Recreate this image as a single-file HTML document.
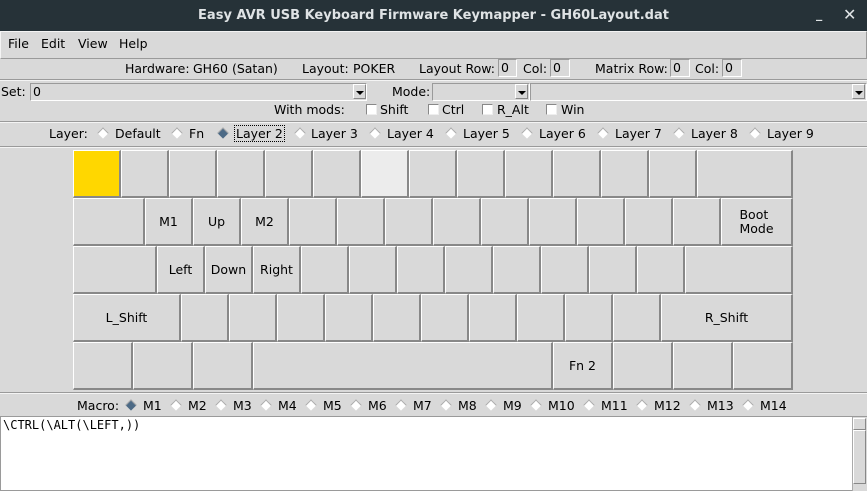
<!DOCTYPE html>
<html><head><meta charset="utf-8"><style>
*{margin:0;padding:0;box-sizing:border-box}
body{width:867px;height:491px;background:#d9d9d9;font-family:"DejaVu Sans","Liberation Sans",sans-serif;font-size:12.5px;color:#000;position:relative;overflow:hidden}
.a{position:absolute;white-space:nowrap;line-height:15px}
#title{position:absolute;left:0;top:0;width:867px;height:31px;background:#263238;color:#dfe3e5;font-weight:bold;font-size:13px;text-align:center;line-height:31px}
.hr{position:absolute;left:0;width:867px;height:2px;border-top:1px solid #9a9a9a;border-bottom:1px solid #f4f4f4}
.box{position:absolute;background:#d9d9d9;border:1px solid #9a9a9a;border-right-color:#fff;border-bottom-color:#fff;line-height:15px;padding-left:2px}
.cb{position:absolute;background:#d9d9d9;border:1px solid #9a9a9a;border-right-color:#fff;border-bottom-color:#fff;line-height:15px;padding-left:2px}
.arr{position:absolute;width:13px;height:15px;background:#d9d9d9;border:1px solid #fff;border-right-color:#888;border-bottom-color:#888}
.arr:after{content:"";position:absolute;left:2px;top:6px;border-left:4px solid transparent;border-right:4px solid transparent;border-top:4px solid #000}
.chk{position:absolute;width:11px;height:11px;background:#fff;border:1px solid #888;border-right-color:#eee;border-bottom-color:#eee}
.rd{position:absolute;width:8px;height:8px;background:#fff;transform:rotate(45deg);border-top:1px solid #aaa;border-left:1px solid #aaa}
.rd.on{background:#4c6a86}
.k{position:absolute;height:48px;background:#d9d9d9;border-top:1px solid #fff;border-left:1px solid #fff;border-right:2px solid #888;border-bottom:2px solid #888;text-align:center;display:flex;align-items:center;justify-content:center;line-height:14px}
</style></head><body>
<div id="title">Easy AVR USB Keyboard Firmware Keymapper - GH60Layout.dat</div>
<div class="a" style="left:816px;top:6px;color:#dfe3e5;font-weight:bold">_</div>
<div class="a" style="left:843px;top:7px;color:#dfe3e5;font-size:16px">✕</div>
<div style="position:absolute;left:0;top:31px;width:867px;height:28px;border-top:1px solid #f4f4f4;border-bottom:1px solid #9a9a9a;border-left:1px solid #f4f4f4;border-right:1px solid #9a9a9a"></div>
<div class="a" style="left:8px;top:36px">File</div>
<div class="a" style="left:41px;top:36px">Edit</div>
<div class="a" style="left:78px;top:36px">View</div>
<div class="a" style="left:119px;top:36px">Help</div>

<div class="a" style="left:125px;top:61px">Hardware:</div>
<div class="a" style="left:193px;top:61px">GH60 (Satan)</div>
<div class="a" style="left:302px;top:61px">Layout:</div>
<div class="a" style="left:353px;top:61px">POKER</div>
<div class="a" style="left:419px;top:61px">Layout Row:</div>
<div class="box" style="left:498px;top:59px;width:19px;height:18px">0</div>
<div class="a" style="left:523px;top:61px">Col:</div>
<div class="box" style="left:550px;top:59px;width:20px;height:18px">0</div>
<div class="a" style="left:595px;top:61px">Matrix Row:</div>
<div class="box" style="left:670px;top:59px;width:20px;height:18px">0</div>
<div class="a" style="left:695px;top:61px">Col:</div>
<div class="box" style="left:722px;top:59px;width:20px;height:18px">0</div>
<div class="hr" style="top:79px"></div>

<div class="a" style="left:1px;top:84px">Set:</div>
<div class="cb" style="left:30px;top:83px;width:337px;height:18px">0</div>
<div class="arr" style="left:353px;top:84px"></div>
<div class="a" style="left:392px;top:84px">Mode:</div>
<div class="cb" style="left:432px;top:83px;width:98px;height:18px"></div>
<div class="arr" style="left:515px;top:84px"></div>
<div class="cb" style="left:530px;top:83px;width:337px;height:18px"></div>
<div class="arr" style="left:852px;top:84px"></div>
<div class="a" style="left:274px;top:102px">With mods:</div>
<div class="chk" style="left:366px;top:104px"></div><div class="a" style="left:380px;top:102px">Shift</div>
<div class="chk" style="left:428px;top:104px"></div><div class="a" style="left:442px;top:102px">Ctrl</div>
<div class="chk" style="left:482px;top:104px"></div><div class="a" style="left:497px;top:102px">R_Alt</div>
<div class="chk" style="left:546px;top:104px"></div><div class="a" style="left:561px;top:102px">Win</div>
<div class="hr" style="top:121px"></div>

<div class="a" style="left:49px;top:126px">Layer:</div>
<div class="rd" style="left:99px;top:129px"></div><div class="a" style="left:115px;top:126px">Default</div>
<div class="rd" style="left:173px;top:129px"></div><div class="a" style="left:189px;top:126px">Fn</div>
<div class="rd on" style="left:219px;top:129px"></div><div class="a" style="left:234px;top:125px;border:1px dotted #000;padding:0 1px">Layer 2</div>
<div class="rd" style="left:296px;top:129px"></div><div class="a" style="left:311px;top:126px">Layer 3</div>
<div class="rd" style="left:371px;top:129px"></div><div class="a" style="left:387px;top:126px">Layer 4</div>
<div class="rd" style="left:447px;top:129px"></div><div class="a" style="left:463px;top:126px">Layer 5</div>
<div class="rd" style="left:523px;top:129px"></div><div class="a" style="left:539px;top:126px">Layer 6</div>
<div class="rd" style="left:599px;top:129px"></div><div class="a" style="left:615px;top:126px">Layer 7</div>
<div class="rd" style="left:675px;top:129px"></div><div class="a" style="left:691px;top:126px">Layer 8</div>
<div class="rd" style="left:751px;top:129px"></div><div class="a" style="left:767px;top:126px">Layer 9</div>
<div class="hr" style="top:146px"></div>

<!-- row 0 -->
<div class="k" style="left:73px;top:150px;width:48px;background:#ffd700"></div>
<div class="k" style="left:121px;top:150px;width:48px"></div>
<div class="k" style="left:169px;top:150px;width:48px"></div>
<div class="k" style="left:217px;top:150px;width:48px"></div>
<div class="k" style="left:265px;top:150px;width:48px"></div>
<div class="k" style="left:313px;top:150px;width:48px"></div>
<div class="k" style="left:361px;top:150px;width:48px;background:#ececec"></div>
<div class="k" style="left:409px;top:150px;width:48px"></div>
<div class="k" style="left:457px;top:150px;width:48px"></div>
<div class="k" style="left:505px;top:150px;width:48px"></div>
<div class="k" style="left:553px;top:150px;width:48px"></div>
<div class="k" style="left:601px;top:150px;width:48px"></div>
<div class="k" style="left:649px;top:150px;width:48px"></div>
<div class="k" style="left:697px;top:150px;width:96px"></div>
<!-- row 1 -->
<div class="k" style="left:73px;top:198px;width:72px"></div>
<div class="k" style="left:145px;top:198px;width:48px">M1</div>
<div class="k" style="left:193px;top:198px;width:48px">Up</div>
<div class="k" style="left:241px;top:198px;width:48px">M2</div>
<div class="k" style="left:289px;top:198px;width:48px"></div>
<div class="k" style="left:337px;top:198px;width:48px"></div>
<div class="k" style="left:385px;top:198px;width:48px"></div>
<div class="k" style="left:433px;top:198px;width:48px"></div>
<div class="k" style="left:481px;top:198px;width:48px"></div>
<div class="k" style="left:529px;top:198px;width:48px"></div>
<div class="k" style="left:577px;top:198px;width:48px"></div>
<div class="k" style="left:625px;top:198px;width:48px"></div>
<div class="k" style="left:673px;top:198px;width:48px"></div>
<div class="k" style="left:721px;top:198px;width:72px;text-align:left">Boot<br>Mode</div>
<!-- row 2 -->
<div class="k" style="left:73px;top:246px;width:84px"></div>
<div class="k" style="left:157px;top:246px;width:48px">Left</div>
<div class="k" style="left:205px;top:246px;width:48px">Down</div>
<div class="k" style="left:253px;top:246px;width:48px">Right</div>
<div class="k" style="left:301px;top:246px;width:48px"></div>
<div class="k" style="left:349px;top:246px;width:48px"></div>
<div class="k" style="left:397px;top:246px;width:48px"></div>
<div class="k" style="left:445px;top:246px;width:48px"></div>
<div class="k" style="left:493px;top:246px;width:48px"></div>
<div class="k" style="left:541px;top:246px;width:48px"></div>
<div class="k" style="left:589px;top:246px;width:48px"></div>
<div class="k" style="left:637px;top:246px;width:48px"></div>
<div class="k" style="left:685px;top:246px;width:108px"></div>
<!-- row 3 -->
<div class="k" style="left:73px;top:294px;width:108px">L_Shift</div>
<div class="k" style="left:181px;top:294px;width:48px"></div>
<div class="k" style="left:229px;top:294px;width:48px"></div>
<div class="k" style="left:277px;top:294px;width:48px"></div>
<div class="k" style="left:325px;top:294px;width:48px"></div>
<div class="k" style="left:373px;top:294px;width:48px"></div>
<div class="k" style="left:421px;top:294px;width:48px"></div>
<div class="k" style="left:469px;top:294px;width:48px"></div>
<div class="k" style="left:517px;top:294px;width:48px"></div>
<div class="k" style="left:565px;top:294px;width:48px"></div>
<div class="k" style="left:613px;top:294px;width:48px"></div>
<div class="k" style="left:661px;top:294px;width:132px">R_Shift</div>
<!-- row 4 -->
<div class="k" style="left:73px;top:342px;width:60px"></div>
<div class="k" style="left:133px;top:342px;width:60px"></div>
<div class="k" style="left:193px;top:342px;width:60px"></div>
<div class="k" style="left:253px;top:342px;width:300px"></div>
<div class="k" style="left:553px;top:342px;width:60px">Fn 2</div>
<div class="k" style="left:613px;top:342px;width:60px"></div>
<div class="k" style="left:673px;top:342px;width:60px"></div>
<div class="k" style="left:733px;top:342px;width:60px"></div>
<div class="hr" style="top:392px"></div>

<div class="a" style="left:77px;top:398px">Macro:</div>
<div class="rd on" style="left:127px;top:401px"></div><div class="a" style="left:143px;top:398px">M1</div>
<div class="rd" style="left:172px;top:401px"></div><div class="a" style="left:188px;top:398px">M2</div>
<div class="rd" style="left:217px;top:401px"></div><div class="a" style="left:233px;top:398px">M3</div>
<div class="rd" style="left:262px;top:401px"></div><div class="a" style="left:278px;top:398px">M4</div>
<div class="rd" style="left:307px;top:401px"></div><div class="a" style="left:323px;top:398px">M5</div>
<div class="rd" style="left:352px;top:401px"></div><div class="a" style="left:368px;top:398px">M6</div>
<div class="rd" style="left:397px;top:401px"></div><div class="a" style="left:413px;top:398px">M7</div>
<div class="rd" style="left:442px;top:401px"></div><div class="a" style="left:458px;top:398px">M8</div>
<div class="rd" style="left:487px;top:401px"></div><div class="a" style="left:503px;top:398px">M9</div>
<div class="rd" style="left:532px;top:401px"></div><div class="a" style="left:548px;top:398px">M10</div>
<div class="rd" style="left:585px;top:401px"></div><div class="a" style="left:601px;top:398px">M11</div>
<div class="rd" style="left:638px;top:401px"></div><div class="a" style="left:654px;top:398px">M12</div>
<div class="rd" style="left:691px;top:401px"></div><div class="a" style="left:707px;top:398px">M13</div>
<div class="rd" style="left:744px;top:401px"></div><div class="a" style="left:760px;top:398px">M14</div>

<div style="position:absolute;left:0;top:416px;width:867px;height:75px;background:#fff;border:1px solid #9a9a9a"></div>
<div class="a" style="left:3px;top:418px;font-family:'DejaVu Sans Mono','Liberation Mono',monospace;font-size:12px">\CTRL(\ALT(\LEFT,))</div>
<div style="position:absolute;left:852px;top:417px;width:15px;height:74px;background:#d9d9d9;border-left:1px solid #aaa"></div>
<div style="position:absolute;left:853px;top:418px;width:13px;height:12px;border:1px solid #fff;border-right-color:#888;border-bottom-color:#888"></div>
<div style="position:absolute;left:853px;top:430px;width:13px;height:54px;border:1px solid #fff;border-right-color:#888;border-bottom-color:#888"></div>
</body></html>
